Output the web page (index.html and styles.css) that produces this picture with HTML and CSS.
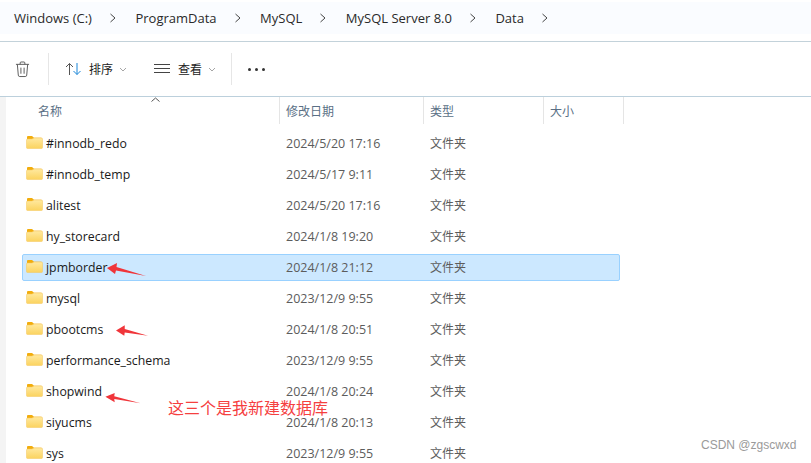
FILE: index.html
```
<!DOCTYPE html>
<html lang="zh">
<head>
<meta charset="utf-8">
<title>Data</title>
<link rel="stylesheet" href="styles.css">
</head>
<body>
<div class="window">
  <nav class="crumbs">
    <span class="crumb">Windows (C:)</span><svg class="sep" viewBox="0 0 8 10"><path d="M1.5 1l4.5 4-4.5 4"/></svg>
    <span class="crumb">ProgramData</span><svg class="sep" viewBox="0 0 8 10"><path d="M1.5 1l4.5 4-4.5 4"/></svg>
    <span class="crumb">MySQL</span><svg class="sep" viewBox="0 0 8 10"><path d="M1.5 1l4.5 4-4.5 4"/></svg>
    <span class="crumb">MySQL Server 8.0</span><svg class="sep" viewBox="0 0 8 10"><path d="M1.5 1l4.5 4-4.5 4"/></svg>
    <span class="crumb">Data</span><svg class="sep" viewBox="0 0 8 10"><path d="M1.5 1l4.5 4-4.5 4"/></svg>
  </nav>
  <div class="toolbar">
    <svg class="trash" viewBox="0 0 16 18"><path d="M1 3.5h14M5.5 3.5V2a1 1 0 0 1 1-1h3a1 1 0 0 1 1 1v1.5M2.5 3.5l1 11.5a1.6 1.6 0 0 0 1.6 1.5h5.8a1.6 1.6 0 0 0 1.6-1.5l1-11.500M6.300 7v6.500M9.700 7v6.500"/></svg>
    <span class="tsep"></span>
    <div class="tool sort">
      <svg class="sort-icon" viewBox="0 0 17 14"><path class="ink" d="M4.500 13V1.500M1 5l3.500-3.500L8 5"/><path class="blue" d="M12 1v11.500M8.500 9l3.500 3.500L15.500 9"/></svg>
      <span class="tool-label">排序</span>
      <svg class="chev" viewBox="0 0 8 5"><path d="M1 1l3 3 3-3"/></svg>
    </div>
    <div class="tool view">
      <svg class="view-icon" viewBox="0 0 16 10"><path d="M0 .5h16M0 4.500h16M0 8.500h16"/></svg>
      <span class="tool-label">查看</span>
      <svg class="chev" viewBox="0 0 8 5"><path d="M1 1l3 3 3-3"/></svg>
    </div>
    <span class="tsep"></span>
    <div class="more"><i></i><i></i><i></i></div>
  </div>
  <main class="pane">
    <div class="gutter"></div>
    <div class="content">
      <div class="head">
        <svg class="sort-caret" viewBox="0 0 9 5"><path d="M.5 4.500l4-3.500 4 3.500"/></svg>
        <div class="col c-name">名称</div>
        <div class="col c-date">修改日期</div>
        <div class="col c-type">类型</div>
        <div class="col c-size">大小</div>
      </div>
      <div class="rows">
        <div class="row"><svg class="folder" viewBox="0 0 17 14"><use href="#fd"/></svg><span class="name">#innodb_redo</span><span class="date">2024/5/20 17:16</span><span class="type">文件夹</span></div>
        <div class="row"><svg class="folder" viewBox="0 0 17 14"><use href="#fd"/></svg><span class="name">#innodb_temp</span><span class="date">2024/5/17 9:11</span><span class="type">文件夹</span></div>
        <div class="row"><svg class="folder" viewBox="0 0 17 14"><use href="#fd"/></svg><span class="name">alitest</span><span class="date">2024/5/20 17:16</span><span class="type">文件夹</span></div>
        <div class="row"><svg class="folder" viewBox="0 0 17 14"><use href="#fd"/></svg><span class="name">hy_storecard</span><span class="date">2024/1/8 19:20</span><span class="type">文件夹</span></div>
        <div class="row selected"><svg class="folder" viewBox="0 0 17 14"><use href="#fd"/></svg><span class="name">jpmborder</span><span class="date">2024/1/8 21:12</span><span class="type">文件夹</span></div>
        <div class="row"><svg class="folder" viewBox="0 0 17 14"><use href="#fd"/></svg><span class="name">mysql</span><span class="date">2023/12/9 9:55</span><span class="type">文件夹</span></div>
        <div class="row"><svg class="folder" viewBox="0 0 17 14"><use href="#fd"/></svg><span class="name">pbootcms</span><span class="date">2024/1/8 20:51</span><span class="type">文件夹</span></div>
        <div class="row"><svg class="folder" viewBox="0 0 17 14"><use href="#fd"/></svg><span class="name">performance_schema</span><span class="date">2023/12/9 9:55</span><span class="type">文件夹</span></div>
        <div class="row"><svg class="folder" viewBox="0 0 17 14"><use href="#fd"/></svg><span class="name">shopwind</span><span class="date">2024/1/8 20:24</span><span class="type">文件夹</span></div>
        <div class="row"><svg class="folder" viewBox="0 0 17 14"><use href="#fd"/></svg><span class="name">siyucms</span><span class="date">2024/1/8 20:13</span><span class="type">文件夹</span></div>
        <div class="row"><svg class="folder" viewBox="0 0 17 14"><use href="#fd"/></svg><span class="name">sys</span><span class="date">2023/12/9 9:55</span><span class="type">文件夹</span></div>
      </div>
    </div>
  </main>
  <svg class="arrow a1" viewBox="0 0 40 14"><path d="M0 5L10 0 9.500 4 39 13 9 7.500 8 11z"/></svg>
  <svg class="arrow a2" viewBox="0 0 34 12"><path d="M0 5.500L9 0 9 4 33 11 9 7.500 8.500 11z"/></svg>
  <svg class="arrow a3" viewBox="0 0 40 14"><path d="M0 4L10 0 9.500 3.500 38 11 9.500 6.500 10 10z"/></svg>
  <div class="note">这三个是我新建数据库</div>
  <div class="mark">CSDN @zgscwxd</div>
</div>
<svg class="defs" width="0" height="0">
  <defs>
    <linearGradient id="fg" x1="0" y1="0" x2="0" y2="1"><stop offset="0" stop-color="#ffe9a0"/><stop offset="1" stop-color="#fbd35f"/></linearGradient>
    <g id="fd">
      <path d="M1 12V2a1 1 0 0 1 1-1h4l2 1.800h7a1 1 0 0 1 1 1V12z" fill="#f2ad0d"/>
      <path d="M.5 12.500V5a1 1 0 0 1 1-1L6 4 8 3h7.500a1 1 0 0 1 1 1v8.500a1 1 0 0 1-1 1h-14a1 1 0 0 1-1-1z" fill="url(#fg)" stroke="#f4c65a" stroke-width=".5"/>
    </g>
  </defs>
</svg>
</body>
</html>
```
FILE: styles.css
```
* { box-sizing: border-box; }
html, body { margin: 0; padding: 0; background: #fff; overflow: hidden; }
body { width: 811px; height: 463px; font-family: "Open Sans", "Noto Sans", "Noto Sans CJK SC", sans-serif; color: #1f1f1f; }
.window { position: relative; width: 811px; height: 463px; overflow: hidden; display: flex; flex-direction: column; }
.defs { position: absolute; }

.crumbs { margin-top: 2px; height: 32px; background: #fafcff; display: flex; align-items: center; padding-left: 14px; font-size: 13px; color: #2a2a2a; }
.crumb { white-space: nowrap; }
.sep { width: 8px; height: 10px; margin: 0 18.500px 0 17px; fill: none; stroke: #444; stroke-width: 1; }

.toolbar { margin-top: 7px; height: 56px; border-top: 1px solid #c3d2da; border-bottom: 1px solid #bcd0dc; display: flex; align-items: center; padding-left: 15px; }
.trash { width: 15px; height: 17px; fill: none; stroke: #555; stroke-width: 1; }
.tsep { width: 1px; height: 32px; background: #e6e6e6; }
.toolbar .trash + .tsep { margin-left: 18px; }
.tool { display: flex; align-items: center; }
.tool-label { font-size: 12px; color: #222; }
.sort { margin-left: 16px; }
.sort-icon { width: 17px; height: 14px; margin-right: 7px; fill: none; stroke-width: 1; }
.ink { stroke: #555; }
.blue { stroke: #1a86d8; }
.chev { width: 8px; height: 5px; margin-left: 6px; fill: none; stroke: #a5a5a5; stroke-width: 1; }
.view { margin-left: 27px; }
.view-icon { width: 16px; height: 10px; margin-right: 8px; fill: none; stroke: #444; stroke-width: 1; }
.view + .tsep { margin-left: 15px; }
.more { margin-left: 16px; display: flex; gap: 4px; }
.more i { width: 3px; height: 3px; border-radius: 50%; background: #333; display: block; }

.pane { flex: 1; display: flex; min-height: 0; }
.gutter { width: 6px; background: #f4f4f4; }
.content { flex: 1; position: relative; }
.head { height: 27px; display: flex; font-size: 12px; color: #5a6f85; }
.sort-caret { position: absolute; left: 145px; top: 0; width: 9px; height: 5px; fill: none; stroke: #555; stroke-width: 1; }
.col { display: flex; align-items: center; padding-left: 6px; border-right: 1px solid #e5e5e5; height: 27px; }
.c-name { width: 274px; padding-left: 32px; }
.c-date { width: 144px; }
.c-type { width: 120px; }
.c-size { width: 80px; }

.rows { display: flex; flex-direction: column; gap: 4px; padding: 6px 0 0 16px; }
.row { width: 598px; height: 27px; display: flex; align-items: center; font-size: 12px; border: 1px solid transparent; border-radius: 2px; flex: none; }
.selected { background: #cce8ff; border-color: #99d1ff; }
.folder { width: 17px; height: 14px; margin-left: 3px; margin-right: 3px; margin-top: -3px; flex: none; }
.name { width: 240px; font-size: 12.300px; line-height: 16px; color: #1a1a1a; white-space: nowrap; }
.date { width: 144px; font-size: 12.500px; line-height: 16px; color: #5c5c5c; white-space: nowrap; }
.type { color: #5c5c5c; font-size: 12px; line-height: 16px; margin-top: 1px; }

.arrow { position: absolute; fill: #f0353a; }
.a1 { left: 107px; top: 263px; width: 40px; height: 14px; }
.a2 { left: 116px; top: 325px; width: 33px; height: 12px; }
.a3 { left: 105px; top: 393px; width: 38px; height: 13px; }
.note { position: absolute; left: 168px; top: 399px; font-size: 16px; line-height: 17px; color: #f5403f; font-family: "Noto Sans CJK SC", sans-serif; white-space: nowrap; }
.mark { position: absolute; left: 701px; top: 437px; font-size: 12px; line-height: 16px; color: #9a9a9a; font-family: "Liberation Sans", sans-serif; white-space: nowrap; }
```
